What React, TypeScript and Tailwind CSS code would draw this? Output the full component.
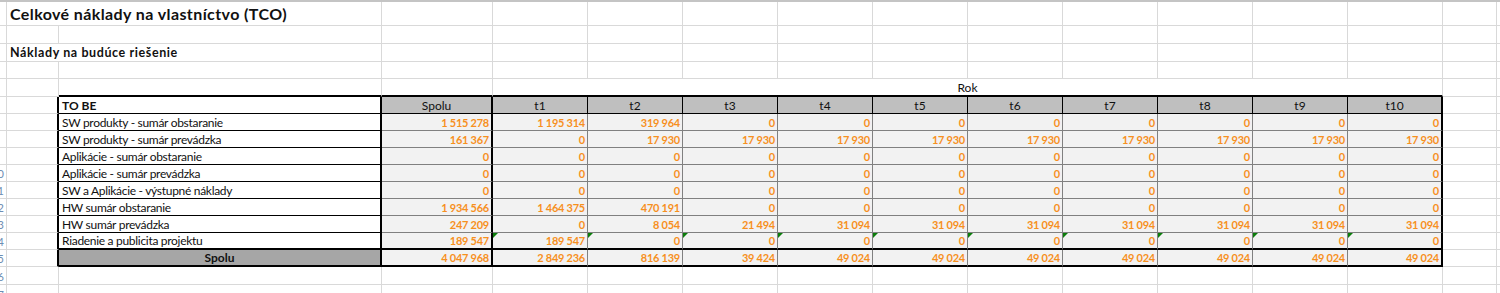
import type { ReactNode } from "react";

const ROW = "grid grid-cols-[7px_52px_323px_111px_repeat(10,95px)_54px_1fr]";
const GRID = "border-r border-b border-[#d9d9d9]";
const NUM =
  "justify-end pr-[2px] text-[11px] font-bold tracking-[-0.25px] text-[#f7901e]";
const YEARS = ["t1", "t2", "t3", "t4", "t5", "t6", "t7", "t8", "t9", "t10"];

type Line = {
  label: string;
  total: string;
  values: string[];
  flagged?: boolean;
};

const zeros = (count: number) => Array.from({ length: count }, () => "0");

const lines: Line[] = [
  {
    label: "SW produkty - sumár obstaranie",
    total: "1 515 278",
    values: ["1 195 314", "319 964", ...zeros(8)],
  },
  {
    label: "SW produkty - sumár prevádzka",
    total: "161 367",
    values: ["0", ...Array.from({ length: 9 }, () => "17 930")],
  },
  { label: "Aplikácie - sumár obstaranie", total: "0", values: zeros(10) },
  { label: "Aplikácie - sumár prevádzka", total: "0", values: zeros(10) },
  {
    label: "SW a Aplikácie - výstupné náklady",
    total: "0",
    values: zeros(10),
  },
  {
    label: "HW sumár obstaranie",
    total: "1 934 566",
    values: ["1 464 375", "470 191", ...zeros(8)],
  },
  {
    label: "HW sumár prevádzka",
    total: "247 209",
    values: [
      "0",
      "8 054",
      "21 494",
      ...Array.from({ length: 7 }, () => "31 094"),
    ],
  },
  {
    label: "Riadenie a publicita projektu",
    total: "189 547",
    values: ["189 547", ...zeros(9)],
    flagged: true,
  },
];

const totals = {
  total: "4 047 968",
  values: [
    "2 849 236",
    "816 139",
    "39 424",
    ...Array.from({ length: 7 }, () => "49 024"),
  ],
};

function Cell({
  className = "",
  children,
}: {
  className?: string;
  children?: ReactNode;
}) {
  return (
    <div className={`flex min-w-0 items-end leading-[15px] ${className}`}>
      {children}
    </div>
  );
}

function RowHead({ n }: { n: number }) {
  return (
    <div className="flex items-end justify-end overflow-hidden border-r border-b border-[#d9d9d9] pr-[2px] text-[11px] leading-[15px] text-[#6d8db3]">
      {n >= 10 ? String(n % 10) : ""}
    </div>
  );
}

// empty gridline cells; the last column only has a bottom line
function EmptyCells({ count }: { count: number }) {
  return (
    <>
      {Array.from({ length: count }, (_, i) => (
        <Cell key={i} className={GRID} />
      ))}
      <Cell className="border-b border-[#d9d9d9]" />
    </>
  );
}

function PlainRow({ n, height }: { n: number; height: string }) {
  return (
    <div className={`${ROW} ${height}`}>
      <RowHead n={n} />
      <EmptyCells count={14} />
    </div>
  );
}

function DataRow({ line, n, last }: { line: Line; n: number; last: boolean }) {
  const bottom = last
    ? "border-b-2 border-b-black"
    : "border-b border-b-[#808080]";
  return (
    <div className={`${ROW} h-[17px]`}>
      <RowHead n={n} />
      <Cell className="border-b border-[#d9d9d9] border-r-2 border-r-black" />
      <Cell
        className={`border-r-2 border-r-black bg-white pl-[3px] tracking-[-0.3px] whitespace-nowrap ${
          last ? "border-b-2 border-b-black" : "border-b border-b-black"
        }`}
      >
        {line.label}
      </Cell>
      <Cell className={`border-r-2 border-r-black bg-[#f2f2f2] ${bottom} ${NUM}`}>
        {line.total}
      </Cell>
      {line.values.map((value, i) => (
        <Cell
          key={i}
          className={`relative bg-[#f2f2f2] ${
            i === 9 ? "border-r-2 border-r-black" : "border-r border-r-[#808080]"
          } ${bottom} ${NUM}`}
        >
          {line.flagged && (
            <span className="absolute top-0 left-0 h-0 w-0 border-t-[5px] border-r-[5px] border-t-[#0b7d0b] border-r-transparent" />
          )}
          {value}
        </Cell>
      ))}
      <EmptyCells count={1} />
    </div>
  );
}

export default function App() {
  return (
    <div className="h-[293px] w-[1500px] overflow-hidden bg-white font-['Lato',sans-serif] text-[12px] text-[#111]">
      <div className="h-[2px] bg-[#c4c4c4]" />

      <div className={`${ROW} h-[24px]`}>
        <RowHead n={1} />
        <Cell className="relative z-10 border-b border-[#d9d9d9] pb-[2px] pl-[3px] text-[16px] leading-[18px] font-bold tracking-[0.4px] whitespace-nowrap">
          Celkové náklady na vlastníctvo (TCO)
        </Cell>
        <EmptyCells count={13} />
      </div>

      <PlainRow n={2} height="h-[18px]" />

      <div className={`${ROW} h-[18px]`}>
        <RowHead n={3} />
        <Cell className="relative z-10 border-b border-[#d9d9d9] pb-px pl-[3px] text-[12.5px] font-bold tracking-[0.6px] whitespace-nowrap">
          Náklady na budúce riešenie
        </Cell>
        <EmptyCells count={13} />
      </div>

      <PlainRow n={4} height="h-[17px]" />

      <div className={`${ROW} h-[18px]`}>
        <RowHead n={5} />
        <Cell className={GRID} />
        <Cell className="border-r border-b-2 border-r-[#d9d9d9] border-b-black" />
        <Cell className="border-r border-b-2 border-r-[#d9d9d9] border-b-black" />
        <Cell className="col-span-10 justify-center border-r border-b-2 border-r-[#d9d9d9] border-b-black">
          Rok
        </Cell>
        <EmptyCells count={1} />
      </div>

      <div className={`${ROW} h-[17px]`}>
        <RowHead n={6} />
        <Cell className="border-b border-[#d9d9d9] border-r-2 border-r-black" />
        <Cell className="border-r-2 border-b border-r-black border-b-black bg-white pl-[3px] font-bold">
          TO BE
        </Cell>
        <Cell className="justify-center border-r-2 border-b border-r-black border-b-black bg-[#bfbfbf]">
          Spolu
        </Cell>
        {YEARS.map((year, i) => (
          <Cell
            key={year}
            className={`justify-center border-b border-b-black bg-[#bfbfbf] ${
              i === 9 ? "border-r-2 border-r-black" : "border-r border-r-black"
            }`}
          >
            {year}
          </Cell>
        ))}
        <EmptyCells count={1} />
      </div>

      {lines.map((line, i) => (
        <DataRow
          key={line.label}
          line={line}
          n={7 + i}
          last={i === lines.length - 1}
        />
      ))}

      <div className={`${ROW} h-[17px]`}>
        <RowHead n={15} />
        <Cell className="border-b border-[#d9d9d9] border-r-2 border-r-black" />
        <Cell className="justify-center border-r-2 border-b-2 border-black bg-[#a6a6a6] font-bold">
          Spolu
        </Cell>
        <Cell className={`border-r-2 border-b-2 border-black bg-[#f2f2f2] ${NUM}`}>
          {totals.total}
        </Cell>
        {totals.values.map((value, i) => (
          <Cell
            key={i}
            className={`border-b-2 border-b-black bg-[#f2f2f2] ${
              i === 9 ? "border-r-2 border-r-black" : "border-r border-r-[#808080]"
            } ${NUM}`}
          >
            {value}
          </Cell>
        ))}
        <EmptyCells count={1} />
      </div>

      <PlainRow n={16} height="h-[18px]" />
      <PlainRow n={17} height="h-[18px]" />
    </div>
  );
}
